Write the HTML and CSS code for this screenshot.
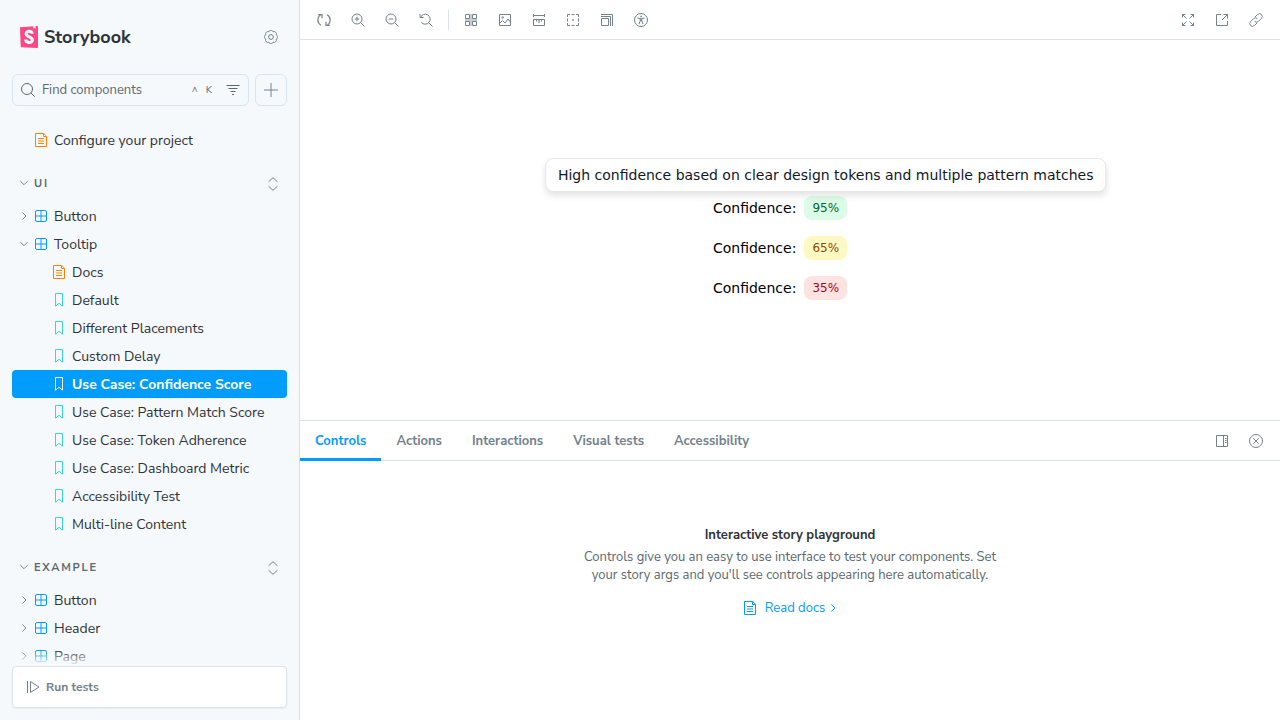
FILE: index.html
```html
<!DOCTYPE html>
<html lang="en">
<head>
<meta charset="utf-8">
<meta name="viewport" content="width=device-width, initial-scale=1">
<title>Tooltip - Use Case: Confidence Score ⋅ Storybook</title>
<link rel="stylesheet" href="styles.css">
</head>
<body>
<svg class="sprite" aria-hidden="true">
  <symbol id="doc" viewBox="0 0 14 14"><path d="M1.500.5h8.300l2.700 2.700v10.300h-11z"/><path d="M9.500.8v2.700h2.700M4 5.500h6M4 10.500h6"/><path d="M4 8h6"/></symbol>
  <symbol id="component" viewBox="0 0 14 14"><rect x="1.500" y="1.500" width="11" height="11" rx="1.500"/><path d="M7 1.500v11M1.500 7h11"/></symbol>
  <symbol id="bookmark" viewBox="0 0 14 14"><path d="M3.500.5h7v12.600L7 10.300l-3.500 2.800z"/></symbol>
  <symbol id="down" viewBox="0 0 8 8"><path d="M.4 2.100L4 5.700l3.600-3.600"/></symbol>
  <symbol id="right" viewBox="0 0 8 8"><path d="M2.300.4L5.900 4 2.300 7.600"/></symbol>
  <symbol id="updown" viewBox="0 0 14 14"><path d="M2.500 4.900L7 .700l4.500 4.200M2.500 9.100L7 13.300l4.500-4.200"/></symbol>
</svg>
<div class="app">
  <aside class="sidebar">
    <header class="brand">
      <a class="logo" href="#">
        <svg width="18" height="22" viewBox="0 0 18 22" aria-hidden="true"><path d="M0 1.200L17.200 0Q18 0 18 .8V21.200Q18 22 17.200 22L1.500 21.300Q.8 21.200.7 20.500z" fill="#ff4785"/><path d="M13.200.3l2.300-.2.100 2.800-1.100-.8-1.200.7z" fill="#fff"/><path d="M12.100 7.800C12 4.500 6.100 4.400 6.100 7.700c0 3.500 6.300 2.700 6.300 6.300 0 3.400-6.700 3.200-6.700-.4" fill="none" stroke="#fff" stroke-width="3"/></svg>
        <span>Storybook</span>
      </a>
      <button class="icon-button" aria-label="Settings"><svg class="icon" viewBox="0 0 14 14"><path d="M12 4.930C14.200 5 14.200 9 12 9.070C13.500 10.700 10.700 13.500 9.070 12C9 14.200 5 14.200 4.930 12C3.300 13.500.5 10.700 2 9.070C-.2 9-.2 5 2 4.930C.5 3.300 3.300.5 4.930 2C5-.2 9-.2 9.070 2C10.700.5 13.500 3.300 12 4.930z"/><circle cx="7" cy="7" r="2.400"/></svg></button>
    </header>
    <div class="search-row">
      <div class="search">
        <svg class="icon" viewBox="0 0 14 14"><circle cx="6" cy="6" r="5.500"/><path d="M10 10l3.700 3.700"/></svg>
        <input type="text" placeholder="Find components" aria-label="Find components">
        <kbd><span>^</span><span>K</span></kbd>
        <button class="filter" aria-label="Filter"><svg class="icon" viewBox="0 0 14 14"><path d="M.5 2.500h13M2.500 5.500h9M4.500 8.500h5M6 11.500h2"/></svg></button>
      </div>
      <button class="create" aria-label="Create a new story"><svg class="icon" viewBox="0 0 14 14"><path d="M7 0v14M0 7h14"/></svg></button>
    </div>
    <nav class="tree" aria-label="Stories">
      <a class="row root" href="#"><svg class="icon orange"><use href="#doc"/></svg>Configure your project</a>
      <div class="heading"><button class="heading-label"><svg class="chevron"><use href="#down"/></svg>UI</button><button class="icon-button expand" aria-label="Expand UI"><svg class="icon"><use href="#updown"/></svg></button></div>
      <button class="row"><svg class="chevron"><use href="#right"/></svg><svg class="icon blue"><use href="#component"/></svg>Button</button>
      <button class="row"><svg class="chevron"><use href="#down"/></svg><svg class="icon blue"><use href="#component"/></svg>Tooltip</button>
      <a class="row story" href="#"><svg class="icon orange"><use href="#doc"/></svg>Docs</a>
      <a class="row story" href="#"><svg class="icon teal"><use href="#bookmark"/></svg>Default</a>
      <a class="row story" href="#"><svg class="icon teal"><use href="#bookmark"/></svg>Different Placements</a>
      <a class="row story" href="#"><svg class="icon teal"><use href="#bookmark"/></svg>Custom Delay</a>
      <a class="row story selected" href="#" aria-current="page"><svg class="icon"><use href="#bookmark"/></svg>Use Case: Confidence Score</a>
      <a class="row story" href="#"><svg class="icon teal"><use href="#bookmark"/></svg>Use Case: Pattern Match Score</a>
      <a class="row story" href="#"><svg class="icon teal"><use href="#bookmark"/></svg>Use Case: Token Adherence</a>
      <a class="row story" href="#"><svg class="icon teal"><use href="#bookmark"/></svg>Use Case: Dashboard Metric</a>
      <a class="row story" href="#"><svg class="icon teal"><use href="#bookmark"/></svg>Accessibility Test</a>
      <a class="row story" href="#"><svg class="icon teal"><use href="#bookmark"/></svg>Multi-line Content</a>
      <div class="heading"><button class="heading-label"><svg class="chevron"><use href="#down"/></svg>EXAMPLE</button><button class="icon-button expand" aria-label="Expand Example"><svg class="icon"><use href="#updown"/></svg></button></div>
      <button class="row"><svg class="chevron"><use href="#right"/></svg><svg class="icon blue"><use href="#component"/></svg>Button</button>
      <button class="row"><svg class="chevron"><use href="#right"/></svg><svg class="icon blue"><use href="#component"/></svg>Header</button>
      <button class="row"><svg class="chevron"><use href="#right"/></svg><svg class="icon blue"><use href="#component"/></svg>Page</button>
    </nav>
    <footer class="testing">
      <button class="run"><svg class="icon" viewBox="0 0 14 14"><path d="M1.500 1v12M4.500 1.500v11l8.500-5.500z" stroke-linejoin="round"/></svg>Run tests</button>
    </footer>
  </aside>
  <main class="main">
    <div class="toolbar">
      <button class="icon-button" aria-label="Reload story"><svg class="icon" viewBox="0 0 14 14"><path d="M5 1.200A6 6 0 0 0 4 12.200M1.200 1.500h3.800v3.800M9 12.800A6 6 0 0 0 10 1.800M12.800 12.500H9V8.700" stroke-width="1.200"/></svg></button>
      <button class="icon-button" aria-label="Zoom in"><svg class="icon" viewBox="0 0 14 14"><circle cx="6" cy="6" r="5"/><path d="M9.600 9.600l3.900 3.900M6 3.700v4.600M3.700 6h4.600"/></svg></button>
      <button class="icon-button" aria-label="Zoom out"><svg class="icon" viewBox="0 0 14 14"><circle cx="6" cy="6" r="5"/><path d="M9.600 9.600l3.900 3.900M3.700 6h4.600"/></svg></button>
      <button class="icon-button" aria-label="Reset zoom"><svg class="icon" viewBox="0 0 14 14"><path d="M1.500 4.300A5 5 0 1 1 2.300 9.400M1 .8v3.700h3.700M9.600 9.600l3.900 3.900"/></svg></button>
      <span class="separator"></span>
      <button class="icon-button" aria-label="Apply a grid"><svg class="icon" viewBox="0 0 14 14"><path d="M1.500 1.500h4v4h-4zM8.500 1.500h4v4h-4zM1.500 8.500h4v4h-4zM8.500 8.500h4v4h-4z"/><path d="M7 1v12M1 7h12" stroke-width="2" opacity=".4"/></svg></button>
      <button class="icon-button" aria-label="Change background"><svg class="icon" viewBox="0 0 14 14"><path d="M1.500 1.500h11v11h-11zM1.500 10.500l3-3 2.500 2.500 3-4 2.500 3"/><circle cx="4.700" cy="4.500" r=".8"/></svg></button>
      <button class="icon-button" aria-label="Enable measure"><svg class="icon" viewBox="0 0 14 14"><path d="M1.500 1v3M12.500 1v3M1.500 2.500h11M1.500 6.500h11v6h-11zM4.500 6.500v2M9.500 6.500v2"/><path d="M7 6.500v3.500" stroke-width="2" opacity=".6"/></svg></button>
      <button class="icon-button" aria-label="Apply outlines"><svg class="icon" viewBox="0 0 14 14"><path d="M1.500 4V1.500H4M10 1.500h2.500V4M12.500 10v2.500H10M4 12.500H1.500V10M5.500 1.500h3M5.500 12.500h3M1.500 5.500v3M12.500 5.500v3"/><path d="M6 7h2" stroke-width="2" opacity=".6"/></svg></button>
      <button class="icon-button" aria-label="Viewport size"><svg class="icon" viewBox="0 0 14 14"><path d="M1.500 5.500h7v7h-7zM1 3.500h9.500V13M1 1.500h11.500V13"/></svg></button>
      <button class="icon-button" aria-label="Vision filter"><svg class="icon" viewBox="0 0 14 14"><circle cx="7" cy="7" r="6.500"/><path d="M3.500 5l2.700.6v2.400L5 11M10.500 5l-2.700.6v2.400L9 11M6 5.700h2M6 7.500h2"/><circle cx="7" cy="3.400" r=".5"/></svg></button>
      <span class="spacer"></span>
      <button class="icon-button" aria-label="Go full screen"><svg class="icon" viewBox="0 0 14 14"><path d="M1.500 4.500v-3h3M1.500 1.500l4 4M9.500 1.500h3v3M12.500 1.500l-4 4M12.500 9.500v3h-3M12.500 12.500l-4-4M4.500 12.500h-3v-3M1.500 12.500l4-4"/></svg></button>
      <button class="icon-button" aria-label="Open in new tab"><svg class="icon" viewBox="0 0 14 14"><path d="M6 1.500H1.500v11h11V8M8.500 1.500h4v4M12.500 1.500L7 7"/></svg></button>
      <button class="icon-button" aria-label="Copy link"><svg class="icon" viewBox="0 0 14 14"><path d="M6 4l2.500-2.500a2.700 2.700 0 0 1 3.900 3.900L9.500 8.300a2.700 2.700 0 0 1-3.900 0M8 10l-2.500 2.500a2.700 2.700 0 0 1-3.900-3.900l2.900-2.900a2.700 2.700 0 0 1 3.900 0"/></svg></button>
    </div>
    <section class="canvas" aria-label="Preview">
      <div class="scores">
        <div class="score"><span>Confidence:</span><span class="badge high">95%<span class="tooltip" role="tooltip">High confidence based on clear design tokens and multiple pattern matches</span></span></div>
        <div class="score"><span>Confidence:</span><span class="badge medium">65%</span></div>
        <div class="score"><span>Confidence:</span><span class="badge low">35%</span></div>
      </div>
    </section>
    <section class="panel" aria-label="Addons">
      <div class="tabs" role="tablist">
        <button class="tab active" role="tab" aria-selected="true">Controls</button>
        <button class="tab" role="tab">Actions</button>
        <button class="tab" role="tab">Interactions</button>
        <button class="tab" role="tab">Visual tests</button>
        <button class="tab" role="tab">Accessibility</button>
        <span class="spacer"></span>
        <button class="icon-button" aria-label="Change addon orientation"><svg class="icon" viewBox="0 0 14 14"><path d="M1.500 1.500h11v11h-11zM8.500 1.500v11M10 4.500h1.500M10 6.500h1.500M10 8.500h1.500"/></svg></button>
        <button class="icon-button" aria-label="Hide addons"><svg class="icon" viewBox="0 0 14 14"><circle cx="7" cy="7" r="6.500"/><path d="M4.300 4.300l5.400 5.400M9.700 4.300L4.300 9.700"/></svg></button>
      </div>
      <div class="empty">
        <h2>Interactive story playground</h2>
        <p>Controls give you an easy to use interface to test your components. Set your story args and you'll see controls appearing here automatically.</p>
        <a class="docs" href="#"><svg class="icon"><use href="#doc"/></svg>Read docs<svg class="chevron"><use href="#right"/></svg></a>
      </div>
    </section>
  </main>
</div>
</body>
</html>
```
FILE: styles.css
```css
* { box-sizing: border-box; }
body {
  margin: 0;
  font-family: "Nunito Sans", "Open Sans", sans-serif;
  font-size: 14px;
  color: #2e3438;
  background: #fff;
}
button, input { font: inherit; color: inherit; }
button { border: 0; background: none; padding: 0; cursor: pointer; }
a { color: inherit; text-decoration: none; }
.sprite { display: none; }
.icon { width: 14px; height: 14px; fill: none; stroke: currentColor; flex: none; }
.chevron { width: 8px; height: 8px; fill: none; stroke: #73828c; flex: none; }
.spacer { flex: 1; }
.icon-button {
  width: 28px; height: 28px; flex: none;
  display: flex; align-items: center; justify-content: center;
  color: #73828c;
}
.app { display: grid; grid-template-columns: 300px 1fr; height: 100vh; }

.sidebar {
  display: flex; flex-direction: column; min-height: 0;
  padding: 0 12px;
  background: #f6f9fc;
  border-right: 1px solid #d9e0e5;
}
.brand {
  display: flex; align-items: center; justify-content: space-between;
  height: 74px; flex: none; padding: 0 2px 0 8px;
}
.logo { display: flex; align-items: center; gap: 6px; font-size: 18px; font-weight: 700; }
.search-row { display: flex; gap: 6px; height: 32px; flex: none; }
.search {
  flex: 1; min-width: 0; display: flex; align-items: center; gap: 7px;
  padding: 0 8px; color: #5c6870;
  border: 1px solid #d5e5f2; border-radius: 6px;
}
.search input { flex: 1; min-width: 0; padding: 0; border: 0; outline: 0; background: none; font-size: 13px; }
.search input::placeholder { color: #5c6870; opacity: 1; }
.search kbd { display: flex; align-items: center; gap: 8px; font-family: inherit; font-size: 10px; line-height: 16px; margin-right: 7px; }
.filter { display: flex; }
.create {
  width: 32px; flex: none; display: flex; align-items: center; justify-content: center;
  border: 1px solid #d5e5f2; border-radius: 6px; color: #73828c;
}
.tree { flex: 1; min-height: 0; overflow: hidden; padding-top: 20px; }
.row {
  display: flex; align-items: center; gap: 6px;
  width: 100%; height: 28px; padding: 0 8px;
  border-radius: 4px; text-align: left; white-space: nowrap;
}
.root { padding-left: 22px; }
.story { padding-left: 40px; }
.selected { background: #029cfd; color: #fff; font-weight: 700; }
.orange { color: #ff8300; }
.blue { color: #029cfd; }
.teal { color: #37d5d3; }
.heading { display: flex; align-items: center; justify-content: space-between; height: 28px; margin: 16px 0 4px; padding-left: 8px; }
.heading-label {
  display: flex; align-items: center; gap: 6px; padding-bottom: 2px;
  font-size: 11px; font-weight: 700; letter-spacing: .16em; color: #5c6870;
}
.testing { position: relative; padding-bottom: 12px; flex: none; }
.testing::before {
  content: ""; position: absolute; left: 0; right: 0; bottom: 100%; height: 16px;
  background: linear-gradient(rgba(246, 249, 252, 0), #f6f9fc);
}
.run {
  display: flex; align-items: center; gap: 6px; width: 100%; height: 42px; padding: 0 13px;
  background: #fff; border: 1px solid #dce4ea; border-radius: 4px;
  box-shadow: 0 1px 2px rgba(0, 0, 0, .05);
  font-size: 12px; font-weight: 700; color: #73828c;
}

.main { display: grid; grid-template-rows: 40px 380px 1fr; min-width: 0; }
.toolbar { display: flex; align-items: center; gap: 6px; padding: 0 10px; border-bottom: 1px solid #e0e3e5; }
.separator { width: 1px; height: 20px; margin: 0 2px; background: #d9e3e9; }
.canvas {
  display: flex; align-items: center; justify-content: center;
  padding: 36px 20px 0 0;
  font-family: "DejaVu Sans", sans-serif; color: #000;
}
.scores { display: flex; flex-direction: column; gap: 16px; }
.score { display: flex; align-items: center; gap: 8px; height: 24px; }
.badge { position: relative; padding: 4px 8px; border-radius: 8px; font-size: 12px; line-height: 16px; }
.high { background: #dcfce7; color: #016630; }
.medium { background: #fef9c2; color: #894b00; }
.low { background: #ffe2e2; color: #9f0712; }
.tooltip {
  position: absolute; bottom: 100%; left: 50%; transform: translateX(-50%);
  margin-bottom: 4px; padding: 6px 12px;
  background: #fff; border: 1px solid #e5e7eb; border-radius: 8px;
  box-shadow: 0 4px 6px rgba(0, 0, 0, .1);
  color: #101828; font-size: 14px; line-height: 20px; white-space: nowrap;
}
.panel { border-top: 1px solid #dde2e5; min-width: 0; }
.tabs { display: flex; align-items: center; height: 40px; padding-right: 10px; border-bottom: 1px solid #dde2e5; }
.tab {
  height: 40px; padding: 3px 15px 0; margin-bottom: -1px;
  border-bottom: 3px solid transparent;
  font-size: 13px; font-weight: 700; color: #73828c;
}
.active { color: #029cfd; border-color: #029cfd; }
.tabs .icon-button + .icon-button { margin-left: 6px; }
.empty {
  display: flex; flex-direction: column; align-items: center;
  max-width: 415px; margin: 0 auto; padding-top: 65px;
  font-size: 13px; line-height: 18px; text-align: center;
}
.empty h2 { margin: 0 0 4px; font-size: 13px; font-weight: 700; }
.empty p { margin: 0; color: #5c6870; }
.docs { display: flex; align-items: center; gap: 8px; margin-top: 15px; color: #029cfd; }
.docs .chevron { stroke: #029cfd; margin-left: -4px; }
```
